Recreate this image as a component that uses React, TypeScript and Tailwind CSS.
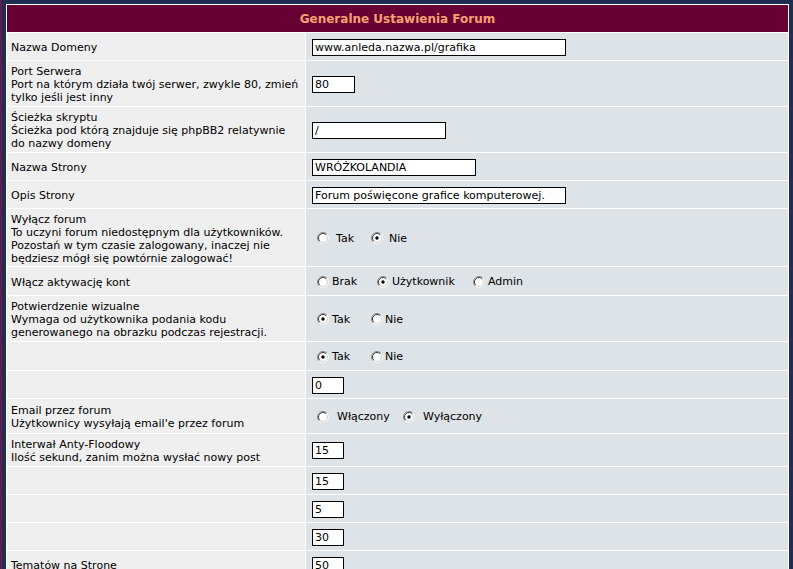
import React from "react";

const FONT = { fontFamily: '"DejaVu Sans", Verdana, sans-serif' };

function Radio({ checked }: { checked?: boolean }) {
  return (
    <svg width="12" height="12" viewBox="0 0 12 12" className="shrink-0">
      <circle cx="6" cy="6" r="5.5" fill="#ffffff" />
      <path d="M2.1 9.9 A5.5 5.5 0 0 1 9.9 2.1" fill="none" stroke="#8a8a8a" strokeWidth="1" />
      <path d="M2.8 9.2 A4.5 4.5 0 0 1 9.2 2.8" fill="none" stroke="#3a3a3a" strokeWidth="1" />
      <path d="M9.9 2.1 A5.5 5.5 0 0 1 2.1 9.9" fill="none" stroke="#f4f4f4" strokeWidth="1" />
      <path d="M9.2 2.8 A4.5 4.5 0 0 1 2.8 9.2" fill="none" stroke="#d4d0c8" strokeWidth="1" />
      {checked && <circle cx="6" cy="6" r="1.7" fill="#000000" />}
    </svg>
  );
}

function Input({ value, w }: { value: string; w: string }) {
  return (
    <div
      className={`${w} h-[17px] bg-white border border-black flex items-center pl-[2px] text-[11px] leading-[13px] text-black whitespace-nowrap overflow-hidden`}
    >
      {value}
    </div>
  );
}

function Left({ lines, h }: { lines: string[]; h: string }) {
  return (
    <div className={`${h} bg-[#efefef] flex items-center pl-[4px] pt-[2px] text-[11px] leading-[13px] text-black whitespace-nowrap overflow-hidden`}>
      <div>
        {lines.map((l, i) => (
          <div key={i}>{l}</div>
        ))}
      </div>
    </div>
  );
}

function Right({ children }: { children?: React.ReactNode }) {
  return (
    <div className="bg-[#dee3e7] flex items-center pl-[6px] pt-[1px] text-[11px] leading-[13px] text-black whitespace-nowrap">
      {children}
    </div>
  );
}

export default function App() {
  return (
    <div className="w-[793px] h-[569px] overflow-hidden bg-[#1f2d52] flex" style={FONT}>
      <div className="w-[2px] h-full bg-[#5a1d50] shrink-0" />
      <div className="pt-[4px] pl-[4px] pr-[4px] flex-1">
        <div className="w-[783px] bg-white p-px grid grid-cols-[298px_1fr] gap-px">
          <div className="col-span-2 h-[27px] bg-[#680034] flex items-center justify-center text-[12px] font-bold text-[#f9a072]">
            Generalne Ustawienia Forum
          </div>

          <Left h="h-[27px]" lines={["Nazwa Domeny"]} />
          <Right>
            <Input value="www.anleda.nazwa.pl/grafika" w="w-[254px]" />
          </Right>

          <Left
            h="h-[45px]"
            lines={["Port Serwera", "Port na którym działa twój serwer, zwykle 80, zmień", "tylko jeśli jest inny"]}
          />
          <Right>
            <Input value="80" w="w-[43px]" />
          </Right>

          <Left
            h="h-[45px]"
            lines={["Ścieżka skryptu", "Ścieżka pod którą znajduje się phpBB2 relatywnie", "do nazwy domeny"]}
          />
          <Right>
            <Input value="/" w="w-[134px]" />
          </Right>

          <Left h="h-[27px]" lines={["Nazwa Strony"]} />
          <Right>
            <Input value="WRÓŻKOLANDIA" w="w-[164px]" />
          </Right>

          <Left h="h-[27px]" lines={["Opis Strony"]} />
          <Right>
            <Input value="Forum poświęcone grafice komputerowej." w="w-[254px]" />
          </Right>

          <Left
            h="h-[57px]"
            lines={[
              "Wyłącz forum",
              "To uczyni forum niedostępnym dla użytkowników.",
              "Pozostań w tym czasie zalogowany, inaczej nie",
              "będziesz mógł się powtórnie zalogować!",
            ]}
          />
          <Right>
            <div className="flex items-center ml-[5px]">
              <div className="w-[54px] flex items-center">
                <Radio />
                <span className="ml-[7px]">Tak</span>
              </div>
              <div className="flex items-center">
                <Radio checked />
                <span className="ml-[6px]">Nie</span>
              </div>
            </div>
          </Right>

          <Left h="h-[28px]" lines={["Włącz aktywację kont"]} />
          <Right>
            <div className="flex items-center ml-[5px]">
              <div className="w-[60px] flex items-center">
                <Radio />
                <span className="ml-[3px]">Brak</span>
              </div>
              <div className="w-[96px] flex items-center">
                <Radio checked />
                <span className="ml-[3px]">Użytkownik</span>
              </div>
              <div className="flex items-center">
                <Radio />
                <span className="ml-[3px]">Admin</span>
              </div>
            </div>
          </Right>

          <Left
            h="h-[45px]"
            lines={["Potwierdzenie wizualne", "Wymaga od użytkownika podania kodu", "generowanego na obrazku podczas rejestracji."]}
          />
          <Right>
            <div className="flex items-center ml-[5px]">
              <div className="w-[54px] flex items-center">
                <Radio checked />
                <span className="ml-[3px]">Tak</span>
              </div>
              <div className="flex items-center">
                <Radio />
                <span className="ml-[2px]">Nie</span>
              </div>
            </div>
          </Right>

          <Left h="h-[28px]" lines={[""]} />
          <Right>
            <div className="flex items-center ml-[5px]">
              <div className="w-[54px] flex items-center">
                <Radio checked />
                <span className="ml-[3px]">Tak</span>
              </div>
              <div className="flex items-center">
                <Radio />
                <span className="ml-[2px]">Nie</span>
              </div>
            </div>
          </Right>

          <Left h="h-[27px]" lines={[""]} />
          <Right>
            <Input value="0" w="w-[32px]" />
          </Right>

          <Left h="h-[34px]" lines={["Email przez forum", "Użytkownicy wysyłają email'e przez forum"]} />
          <Right>
            <div className="flex items-center ml-[5px]">
              <div className="w-[86px] flex items-center">
                <Radio />
                <span className="ml-[8px]">Włączony</span>
              </div>
              <div className="flex items-center">
                <Radio checked />
                <span className="ml-[8px]">Wyłączony</span>
              </div>
            </div>
          </Right>

          <Left h="h-[32px]" lines={["Interwał Anty-Floodowy", "Ilość sekund, zanim można wysłać nowy post"]} />
          <Right>
            <Input value="15" w="w-[32px]" />
          </Right>

          <Left h="h-[27px]" lines={[""]} />
          <Right>
            <Input value="15" w="w-[32px]" />
          </Right>

          <Left h="h-[27px]" lines={[""]} />
          <Right>
            <Input value="5" w="w-[32px]" />
          </Right>

          <Left h="h-[27px]" lines={[""]} />
          <Right>
            <Input value="30" w="w-[32px]" />
          </Right>

          <Left h="h-[27px]" lines={["Tematów na Stronę"]} />
          <Right>
            <Input value="50" w="w-[32px]" />
          </Right>
        </div>
      </div>
    </div>
  );
}
